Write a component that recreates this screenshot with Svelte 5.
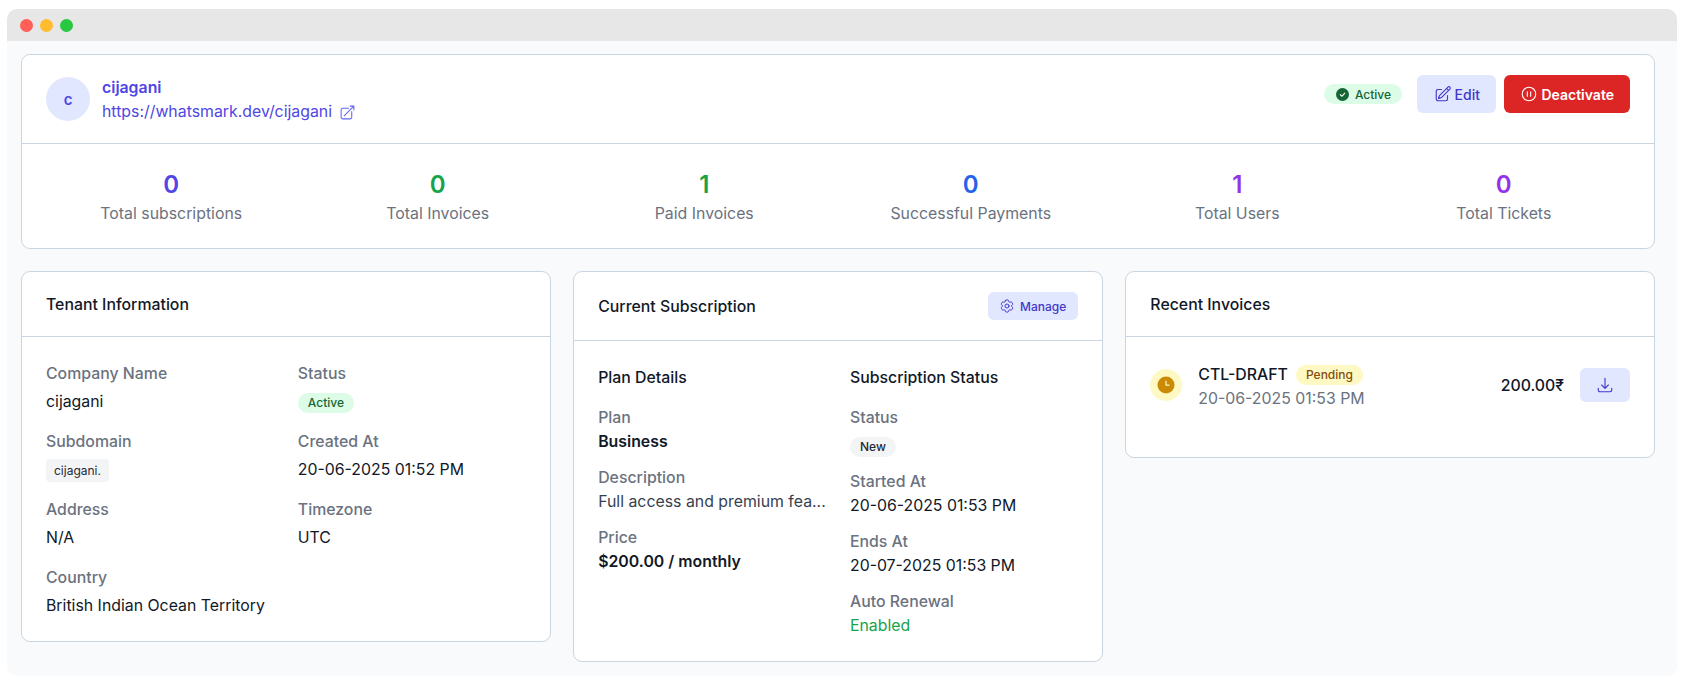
<script>
	const stats = [
		{ value: 0, label: 'Total subscriptions', color: '#4f46e5' },
		{ value: 0, label: 'Total Invoices', color: '#16a34a' },
		{ value: 1, label: 'Paid Invoices', color: '#16a34a' },
		{ value: 0, label: 'Successful Payments', color: '#2563eb' },
		{ value: 1, label: 'Total Users', color: '#9333ea' },
		{ value: 0, label: 'Total Tickets', color: '#9333ea' }
	];
</script>

<div class="window">
	<div class="titlebar">
		<span class="dot red"></span>
		<span class="dot amber"></span>
		<span class="dot green"></span>
	</div>

	<main>
		<section class="card">
			<header class="tenant">
				<div class="avatar">c</div>
				<div class="who">
					<div class="name">cijagani</div>
					<div class="url">
						<span>https://whatsmark.dev/cijagani</span>
						<svg class="ext" viewBox="0 0 24 24" fill="none" stroke="currentColor" stroke-width="1.5" stroke-linecap="round" stroke-linejoin="round">
							<path d="M13.5 6H5.25A2.25 2.25 0 0 0 3 8.25v10.5A2.25 2.25 0 0 0 5.25 21h10.5A2.25 2.25 0 0 0 18 18.75V10.5m-10.5 6L21 3m0 0h-5.25M21 3v5.25" />
						</svg>
					</div>
				</div>
				<div class="actions">
					<span class="badge active with-icon">
						<svg class="check" viewBox="0 0 16 16">
							<circle cx="8" cy="8" r="8" fill="#166534" />
							<path d="M5.2 8.2l2 2 3.6-4" fill="none" stroke="#fff" stroke-width="1.3" stroke-linecap="round" stroke-linejoin="round" />
						</svg>
						Active
					</span>
					<button class="btn soft">
						<svg viewBox="0 0 24 24" fill="none" stroke="currentColor" stroke-width="1.5" stroke-linecap="round" stroke-linejoin="round">
							<path d="m16.862 4.487 1.687-1.688a1.875 1.875 0 1 1 2.652 2.652L10.582 16.07a4.5 4.5 0 0 1-1.897 1.13L6 18l.8-2.685a4.5 4.5 0 0 1 1.13-1.897l8.932-8.931Zm0 0L19.5 7.125M18 14v4.75A2.25 2.25 0 0 1 15.75 21H5.25A2.25 2.25 0 0 1 3 18.75V8.25A2.25 2.25 0 0 1 5.25 6H10" />
						</svg>
						Edit
					</button>
					<button class="btn danger">
						<svg viewBox="0 0 24 24" fill="none" stroke="currentColor" stroke-width="1.5" stroke-linecap="round" stroke-linejoin="round">
							<path d="M14.25 9v6m-4.5 0V9M21 12a9 9 0 1 1-18 0 9 9 0 0 1 18 0Z" />
						</svg>
						Deactivate
					</button>
				</div>
			</header>
			<div class="stats">
				{#each stats as s}
					<div class="stat">
						<div class="num" style="color: {s.color}">{s.value}</div>
						<div class="lbl">{s.label}</div>
					</div>
				{/each}
			</div>
		</section>

		<div class="columns">
			<section class="card">
				<h3 class="head">Tenant Information</h3>
				<div class="info">
					<div class="field">
						<div class="k">Company Name</div>
						<div class="v">cijagani</div>
					</div>
					<div class="field">
						<div class="k">Status</div>
						<div class="v"><span class="badge active">Active</span></div>
					</div>
					<div class="field">
						<div class="k">Subdomain</div>
						<div class="v"><code>cijagani.</code></div>
					</div>
					<div class="field">
						<div class="k">Created At</div>
						<div class="v">20-06-2025 01:52 PM</div>
					</div>
					<div class="field">
						<div class="k">Address</div>
						<div class="v">N/A</div>
					</div>
					<div class="field">
						<div class="k">Timezone</div>
						<div class="v">UTC</div>
					</div>
					<div class="field">
						<div class="k">Country</div>
						<div class="v">British Indian Ocean Territory</div>
					</div>
				</div>
			</section>

			<section class="card">
				<div class="head with-btn">
					<h3>Current Subscription</h3>
					<button class="btn soft small">
						<svg viewBox="0 0 24 24" fill="none" stroke="currentColor" stroke-width="1.5" stroke-linecap="round" stroke-linejoin="round">
							<path d="M9.594 3.94c.09-.542.56-.94 1.11-.94h2.593c.55 0 1.02.398 1.11.94l.213 1.281c.063.374.313.686.645.87.074.04.147.083.22.127.325.196.72.257 1.075.124l1.217-.456a1.125 1.125 0 0 1 1.37.49l1.296 2.247a1.125 1.125 0 0 1-.26 1.431l-1.003.827c-.293.241-.438.613-.43.992a7.723 7.723 0 0 1 0 .255c-.008.378.137.75.43.991l1.004.827c.424.35.534.955.26 1.43l-1.298 2.247a1.125 1.125 0 0 1-1.369.491l-1.217-.456c-.355-.133-.75-.072-1.076.124a6.47 6.47 0 0 1-.22.128c-.331.183-.581.495-.644.869l-.213 1.281c-.09.543-.56.94-1.11.94h-2.594c-.55 0-1.019-.398-1.11-.94l-.213-1.281c-.062-.374-.312-.686-.644-.87a6.52 6.52 0 0 1-.22-.127c-.325-.196-.72-.257-1.076-.124l-1.217.456a1.125 1.125 0 0 1-1.369-.49l-1.297-2.247a1.125 1.125 0 0 1 .26-1.431l1.004-.827c.292-.24.437-.613.43-.991a6.932 6.932 0 0 1 0-.255c.007-.38-.138-.751-.43-.992l-1.004-.827a1.125 1.125 0 0 1-.26-1.43l1.297-2.247a1.125 1.125 0 0 1 1.37-.491l1.216.456c.356.133.751.072 1.076-.124.072-.044.146-.086.22-.128.332-.183.582-.495.644-.869l.214-1.28Z" />
							<path d="M15 12a3 3 0 1 1-6 0 3 3 0 0 1 6 0Z" />
						</svg>
						Manage
					</button>
				</div>
				<div class="sub">
					<div class="sub-col">
						<h4>Plan Details</h4>
						<div class="field">
							<div class="k">Plan</div>
							<div class="v strong">Business</div>
						</div>
						<div class="field">
							<div class="k">Description</div>
							<div class="v desc">Full access and premium fea...</div>
						</div>
						<div class="field">
							<div class="k">Price</div>
							<div class="v strong">$200.00 / monthly</div>
						</div>
					</div>
					<div class="sub-col">
						<h4>Subscription Status</h4>
						<div class="field">
							<div class="k">Status</div>
							<div class="v badge-line"><span class="badge grey">New</span></div>
						</div>
						<div class="field">
							<div class="k">Started At</div>
							<div class="v">20-06-2025 01:53 PM</div>
						</div>
						<div class="field">
							<div class="k">Ends At</div>
							<div class="v">20-07-2025 01:53 PM</div>
						</div>
						<div class="field">
							<div class="k">Auto Renewal</div>
							<div class="v enabled">Enabled</div>
						</div>
					</div>
				</div>
			</section>

			<section class="card">
				<h3 class="head">Recent Invoices</h3>
				<div class="invoice">
					<div class="inv-icon">
						<svg viewBox="0 0 20 20">
							<circle cx="10" cy="10" r="8.5" fill="#ca8a04" />
							<path d="M10 6.2v4h3" fill="none" stroke="#fef9c3" stroke-width="1.2" stroke-linecap="round" stroke-linejoin="round" />
						</svg>
					</div>
					<div class="inv-main">
						<div class="inv-title">CTL-DRAFT <span class="badge pending">Pending</span></div>
						<div class="inv-date">20-06-2025 01:53 PM</div>
					</div>
					<div class="inv-amount">200.00₹</div>
					<button class="btn soft download" aria-label="Download">
						<svg viewBox="0 0 24 24" fill="none" stroke="currentColor" stroke-width="1.5" stroke-linecap="round" stroke-linejoin="round">
							<path d="M3 16.5v2.25A2.25 2.25 0 0 0 5.25 21h13.5A2.25 2.25 0 0 0 21 18.75V16.5M16.5 12 12 16.5m0 0L7.5 12m4.5 4.5V3" />
						</svg>
					</button>
				</div>
			</section>
		</div>
	</main>
</div>

<style>
	:global(body) {
		margin: 0;
		background: #fff;
		font-family: Inter, 'Noto Sans', sans-serif;
		color: #111827;
	}

	.window {
		margin: 9px 7px 9px;
		height: 667px;
		background: #f8fafc;
		border-radius: 10px;
		overflow: hidden;
	}

	.titlebar {
		height: 32px;
		background: #e7e7e7;
		display: flex;
		align-items: center;
		gap: 7px;
		padding-left: 13px;
	}

	.dot {
		width: 13px;
		height: 13px;
		border-radius: 50%;
	}
	.red { background: #ff5f57; }
	.amber { background: #febc2e; }
	.green { background: #28c840; }

	main {
		padding: 13px 22px 0 14px;
	}

	.card {
		background: #fff;
		border: 1px solid #cbd5e1;
		border-radius: 9px;
	}

	.tenant {
		display: flex;
		align-items: center;
		gap: 12px;
		padding: 20px 24px;
		height: 48px;
		border-bottom: 1px solid #cbd5e1;
	}

	.avatar {
		width: 44px;
		height: 44px;
		border-radius: 50%;
		background: #e0e7ff;
		color: #4f46e5;
		display: flex;
		align-items: center;
		justify-content: center;
		font-weight: 600;
		font-size: 15px;
	}

	.who {
		margin-top: 2px;
	}

	.name {
		font-size: 15.85px;
		font-weight: 600;
		color: #4f46e5;
		line-height: 24px;
	}

	.url {
		display: flex;
		align-items: center;
		gap: 7px;
		font-size: 15.85px;
		line-height: 24px;
		color: #4f46e5;
	}

	.ext {
		width: 17px;
		height: 17px;
		color: #6366f1;
	}

	.actions {
		margin-left: auto;
		align-self: flex-start;
		display: flex;
		align-items: center;
		gap: 15px;
	}

	.btn {
		display: inline-flex;
		align-items: center;
		justify-content: center;
		gap: 3px;
		border: none;
		border-radius: 6px;
		font-family: inherit;
		font-size: 14px;
		font-weight: 500;
		height: 38px;
		padding: 0 16.5px;
	}
	.btn svg {
		width: 18px;
		height: 18px;
	}

	.actions .danger {
		margin-left: -7px;
		padding: 0 16px;
	}

	.soft {
		background: #e0e7ff;
		color: #4338ca;
	}

	.danger {
		background: #dc2626;
		color: #fff;
		font-weight: 600;
	}

	.badge {
		display: inline-flex;
		align-items: center;
		gap: 6px;
		height: 20px;
		padding: 0 10px;
		border-radius: 10px;
		font-size: 12px;
		font-weight: 500;
	}
	.with-icon {
		padding: 0 11px 0 12px;
	}
	.active {
		background: #dcfce7;
		color: #166534;
	}
	.check {
		width: 13px;
		height: 13px;
	}
	.grey {
		background: #f3f4f6;
		color: #1f2937;
	}
	.pending {
		background: #fef9c3;
		color: #854d0e;
		margin-left: 8px;
	}

	.stats {
		display: grid;
		grid-template-columns: repeat(6, 1fr);
		padding: 25px 17px 22px 16px;
		text-align: center;
	}

	.num {
		font-size: 24px;
		font-weight: 600;
		line-height: 32px;
	}

	.lbl {
		font-size: 15.85px;
		line-height: 24px;
		margin-top: 1px;
		color: #6b7280;
	}

	.columns {
		display: grid;
		grid-template-columns: repeat(3, 1fr);
		gap: 22.5px;
		margin-top: 22px;
		align-items: start;
	}

	.head {
		margin: 0;
		padding: 0 24px;
		height: 64px;
		line-height: 66px;
		font-size: 15.85px;
		font-weight: 500;
		border-bottom: 1px solid #cbd5e1;
	}

	.with-btn {
		display: flex;
		align-items: center;
		justify-content: space-between;
		height: 68px;
		line-height: normal;
	}
	.with-btn h3 {
		margin: 0;
		font-size: 15.85px;
		font-weight: 500;
	}

	.small {
		height: 28px;
		font-size: 12px;
		padding: 0 11.5px;
		gap: 5px;
	}
	.small svg {
		width: 16px;
		height: 16px;
	}

	.info {
		display: grid;
		grid-template-columns: 1fr 1fr;
		column-gap: 24px;
		row-gap: 16px;
		padding: 25px 24px 23px;
	}

	.k {
		font-size: 15.85px;
		line-height: 24px;
		color: #6b7280;
		font-weight: 500;
	}

	.v {
		font-size: 15.85px;
		line-height: 24px;
		margin-top: 4px;
	}

	code {
		display: inline-block;
		font-family: inherit;
		font-size: 12px;
		line-height: 23px;
		padding: 0 8px;
		background: #f3f4f6;
		border-radius: 4px;
		color: #1f2937;
	}

	.sub {
		display: grid;
		grid-template-columns: 1fr 1fr;
		column-gap: 24px;
		padding: 25px 24px 23px;
	}

	.sub-col {
		display: flex;
		flex-direction: column;
		gap: 12px;
		min-width: 0;
	}

	h4 {
		margin: 0 0 4px;
		font-size: 15.85px;
		font-weight: 500;
		line-height: 24px;
	}

	.sub .v {
		margin-top: 0;
	}

	.sub .badge-line {
		margin-top: 4px;
	}

	.strong {
		font-weight: 600;
	}

	.desc {
		color: #374151;
		white-space: nowrap;
	}

	.enabled {
		color: #16a34a;
	}

	.invoice {
		display: flex;
		align-items: center;
		padding: 24px 24px 48px;
	}

	.inv-icon {
		width: 32px;
		height: 32px;
		border-radius: 50%;
		background: #fef9c3;
		display: flex;
		align-items: center;
		justify-content: center;
		margin-right: 16px;
	}
	.inv-icon svg {
		width: 20px;
		height: 20px;
	}

	.inv-main {
		flex: 1;
		margin-top: 2px;
		margin-bottom: -2px;
	}

	.inv-title {
		display: flex;
		align-items: center;
		font-size: 15.85px;
		font-weight: 500;
		line-height: 24px;
	}

	.inv-date {
		font-size: 15.85px;
		line-height: 24px;
		color: #6b7280;
	}

	.inv-amount {
		font-size: 15.85px;
		font-weight: 500;
		margin-right: 16px;
	}

	.download {
		width: 50px;
		height: 34px;
		padding: 0;
	}
</style>
